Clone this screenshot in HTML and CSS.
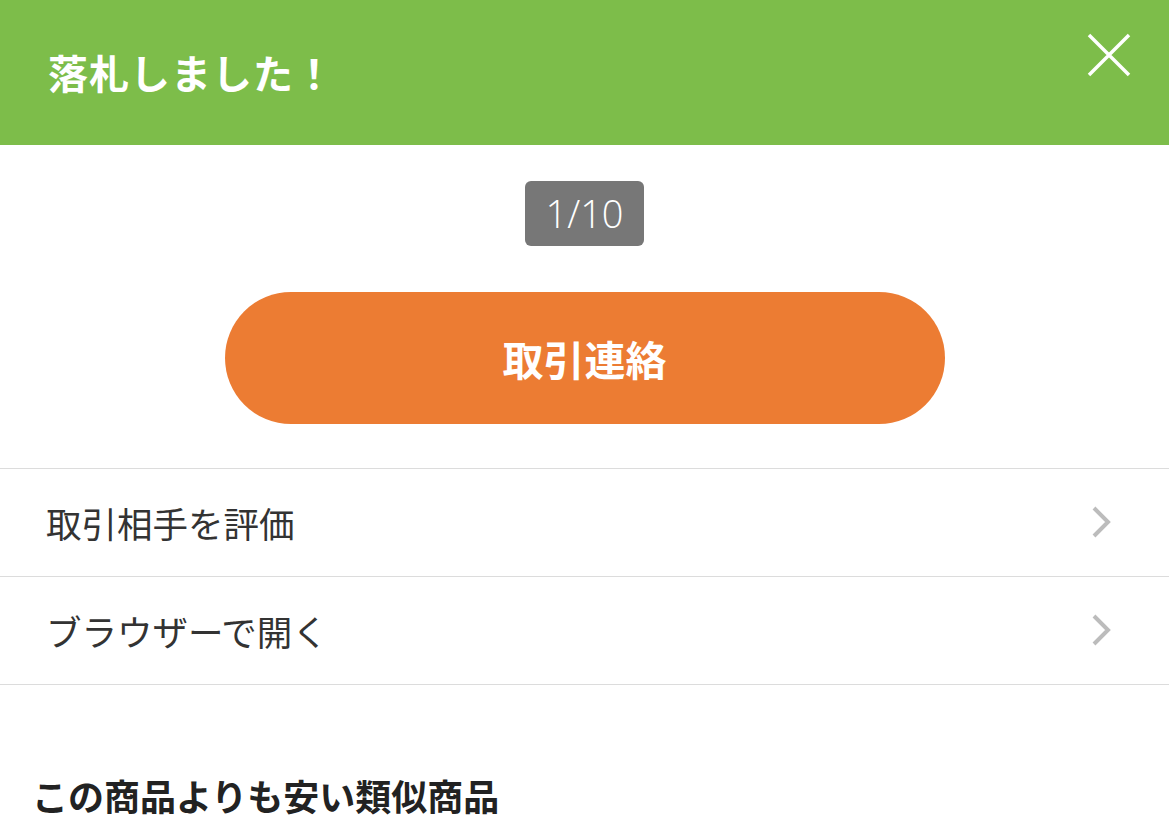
FILE: index.html
```html
<!doctype html>
<html>
	<head>
		<meta charset="utf-8">
		<title>落札しました！</title>
		<link rel="stylesheet" href="styles.css">
	</head>
	<body>
		<div class="header">
			<h1 class="title">落札しました！</h1>
			<a class="close">
				<svg width="44" height="44" viewBox="0 0 44 44">
					<path d="M2 2 L42 42 M42 2 L2 42" stroke="#fff" stroke-width="3.5" fill="none"/>
				</svg>
			</a>
		</div>
		<div class="main">
			<div class="pager"><span>1/10</span></div>
			<a class="contactBtn">取引連絡</a>
		</div>
		<ul class="menu">
			<li>
				<a>取引相手を評価</a>
				<svg class="arrow" width="22" height="34" viewBox="0 0 22 34">
					<path d="M3 3 L17 17 L3 31" stroke="#bcbcbc" stroke-width="4" fill="none"/>
				</svg>
			</li>
			<li>
				<a>ブラウザーで開く</a>
				<svg class="arrow" width="22" height="34" viewBox="0 0 22 34">
					<path d="M3 3 L17 17 L3 31" stroke="#bcbcbc" stroke-width="4" fill="none"/>
				</svg>
			</li>
		</ul>
		<h2 class="sectionTitle">この商品よりも安い類似商品</h2>
	</body>
</html>
```

FILE: styles.css
```css
* {
	margin: 0px;
	padding: 0px;
}
body {
	font-family: "Noto Sans CJK JP", "Noto Sans", sans-serif;
	color: #333;
	background: #fff;
}
ul {
	list-style-type: none;
}
a {
	text-decoration: none;
	color: inherit;
}
.header {
	height: 145px;
	background: rgb(125, 189, 74);
	display: flex;
	align-items: center;
	justify-content: space-between;
	padding: 0 38px 0 48px;
}
.header .title {
	font-size: 40px;
	font-weight: 700;
	color: #fff;
	letter-spacing: 1px;
	margin-top: -2px;
}
.header .close {
	display: block;
	width: 44px;
	height: 44px;
	margin-top: -36px;
}
.main {
	display: flex;
	flex-direction: column;
	align-items: center;
	padding: 36px 0 44px;
}
.pager span {
	display: block;
	width: 119px;
	height: 65px;
	line-height: 65px;
	border-radius: 6px;
	background: #777;
	color: #fff;
	font-family: "Open Sans", "Noto Sans", sans-serif;
	font-size: 38px;
	font-weight: 300;
	text-align: center;
}
.contactBtn {
	display: block;
	margin-top: 46px;
	width: 720px;
	height: 132px;
	line-height: 132px;
	border-radius: 66px;
	background: rgb(236, 124, 51);
	color: #fff;
	font-size: 41px;
	font-weight: 700;
	text-align: center;
}
.menu {
	border-top: 1px solid #dcdcdc;
}
.menu li {
	height: 107px;
	border-bottom: 1px solid #dcdcdc;
	display: flex;
	align-items: center;
	justify-content: space-between;
	padding: 0 56px 0 46px;
	font-size: 35.5px;
}
.menu li .arrow {
	display: block;
	margin-top: -2px;
}
.sectionTitle {
	font-size: 36px;
	font-weight: 700;
	color: #222;
	padding: 84px 0 0 32px;
}
```
